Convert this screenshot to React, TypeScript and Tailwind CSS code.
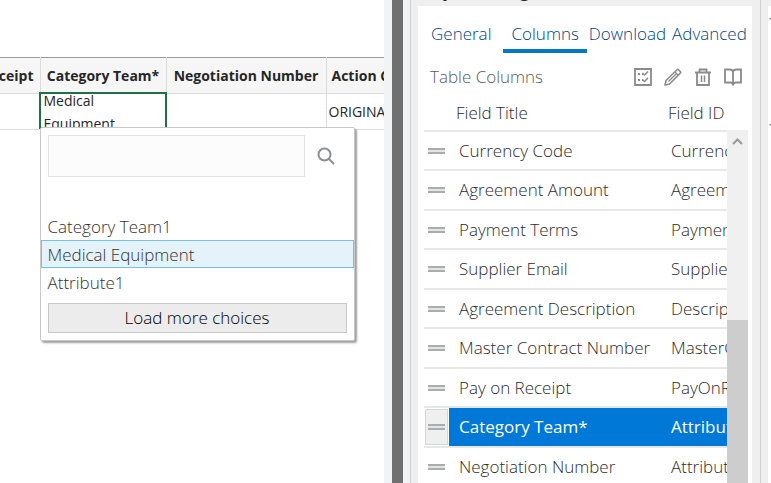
import React from 'react';

const fields = [
  { title: 'Currency Code', id: 'CurrencyCode' },
  { title: 'Agreement Amount', id: 'AgreementAmount' },
  { title: 'Payment Terms', id: 'PaymentTerms' },
  { title: 'Supplier Email', id: 'SupplierEmail' },
  { title: 'Agreement Description', id: 'Description' },
  { title: 'Master Contract Number', id: 'MasterContractNumber' },
  { title: 'Pay on Receipt', id: 'PayOnReceipt' },
  { title: 'Category Team*', id: 'Attribute1', selected: true },
  { title: 'Negotiation Number', id: 'Attribute2' },
];

const choices = ['Category Team1', 'Medical Equipment', 'Attribute1'];

function DragHandle() {
  return (
    <svg width="17" height="6" viewBox="0 0 17 6" className="block" aria-hidden="true">
      <path d="M0 0h17v6H0z" fill="#e4e4e6" />
      <path d="M0 1h17M0 5h17" stroke="#96999b" strokeWidth="1.6" />
    </svg>
  );
}

/* Popup with the list of values for the active cell */
function ChoicePicker() {
  return (
    <div className="absolute -left-px top-[33px] z-10 w-[315px] rounded-xs border border-[#c6c8ca] bg-white text-[17px] font-light text-[#333] shadow-[2px_2px_2px_#a0a0a0]">
      <div className="flex items-center gap-3 px-[7px] pt-[7px]">
        <input
          aria-label="Search choices"
          className="h-[42px] w-[257px] border border-[#e2e2e2] bg-[#fcfcfc] px-2 outline-none"
        />
        <button aria-label="Search">
          <svg width="18" height="18" viewBox="0 0 18 18" fill="none" stroke="#8c8f91" strokeWidth="2">
            <circle cx="7.5" cy="7.5" r="6" />
            <path d="M12 12l5 5" />
          </svg>
        </button>
      </div>
      <ul className="pt-[35px]">
        {choices.map((choice) => (
          <li
            key={choice}
            className={
              choice === 'Medical Equipment'
                ? 'h-7 border border-[#78c0e8] bg-[#e4f2fa] px-1.5 leading-[28px]'
                : 'h-7 px-[7px] leading-[30px]'
            }
          >
            {choice}
          </li>
        ))}
      </ul>
      <div className="p-[7px]">
        <button className="h-[30px] w-full border border-[#c6c8c8] bg-[#ececec] text-black">
          Load more choices
        </button>
      </div>
    </div>
  );
}

function Worksheet() {
  return (
    <main className="min-w-0 flex-1 overflow-hidden bg-white pt-[57px] text-[#262626]">
      <table className="w-[520px] table-fixed border-collapse border-t border-[#999]">
        <colgroup>
          <col className="w-10" />
          <col className="w-[126px]" />
          <col className="w-40" />
          <col className="w-[194px]" />
        </colgroup>
        <thead>
          <tr className="h-9 bg-[#f6f6f6] text-[14px] whitespace-nowrap">
            <th className="border-r border-b border-[#dcdcdc] p-0">
              <div className="flex justify-end pr-1.5">Pay on Receipt</div>
            </th>
            <th className="border-r border-b border-[#dcdcdc] p-0">Category Team*</th>
            <th className="border-r border-b border-[#dcdcdc] p-0">Negotiation Number</th>
            <th className="border-b border-[#dcdcdc] p-0 pl-[5px] text-left">Action Code</th>
          </tr>
        </thead>
        <tbody>
          <tr className="h-9 text-[14px]">
            <td className="border-r border-b border-[#dcdcdc] p-0" />
            <td className="border-r border-b border-[#dcdcdc] p-0 align-top">
              <div className="relative -mt-0.5 -mr-px -ml-0.5 h-[37px] border-2 border-[#1e7145]">
                <div className="-mt-[5px] h-[38px] overflow-hidden pl-[3px] leading-[23px]">
                  Medical
                  <br />
                  Equipment
                </div>
                <ChoicePicker />
              </div>
            </td>
            <td className="border-r border-b border-[#dcdcdc] p-0" />
            <td className="border-b border-[#dcdcdc] p-0 pl-0.5">ORIGINAL</td>
          </tr>
        </tbody>
      </table>
    </main>
  );
}

function Toolbar() {
  return (
    <div className="flex gap-3 text-[#8b8b8b]">
      <button aria-label="Select columns">
        <svg width="18" height="18" viewBox="0 0 18 18" fill="none" stroke="currentColor" strokeWidth="1.8">
          <path d="M1 1h16v16H1z" />
          <path d="M4 6h2M8 6h1M4 12h2M8 12h1" strokeWidth="2" />
          <path d="M8.5 5l2 2L14 3.5M8.5 11.5l2 2L14 10" strokeWidth="1.5" />
        </svg>
      </button>
      <button aria-label="Edit">
        <svg width="18" height="18" viewBox="0 0 18 18" fill="none" stroke="currentColor" strokeWidth="1.6" strokeLinejoin="round">
          <path d="M1 17l1-4.5L13 1.8q.8-.8 1.6 0l1.7 1.7q.8.8 0 1.6L5.5 16z" />
          <path d="M11 4l3.2 3.2M4.5 13.5l8-8" strokeWidth="1.2" />
        </svg>
      </button>
      <button aria-label="Delete">
        <svg width="18" height="18" viewBox="0 0 18 18" fill="none" stroke="currentColor" strokeWidth="1.8">
          <path d="M1 4.5h16M5.5 4V1.5h7V4M3 4.5V17h12V4.5" />
          <path d="M7.5 7.5V14M10.5 7.5V14" strokeWidth="1.5" />
        </svg>
      </button>
      <button aria-label="Help">
        <svg width="18" height="18" viewBox="0 0 18 18" fill="none" stroke="currentColor" strokeWidth="1.8">
          <path d="M9 3.5Q8 1.5 6 1.5H1v13h5.5q1.5 0 2.500 2 1-2 2.500-2H17v-13h-5q-2 0-3 2v13" />
        </svg>
      </button>
    </div>
  );
}

function FieldTable() {
  return (
    <div className="ml-1.5 mr-1 overflow-hidden text-[17px] font-light text-[#2c2c2c]">
      <div className="flex h-[34px] items-center pl-8 pr-5 whitespace-nowrap">
        <span className="w-[212px] shrink-0">Field Title</span>
        <span>Field ID</span>
      </div>
      <div className="flex">
        <table className="min-w-0 flex-1 table-fixed border-t-2 border-[#e7e7e7]">
          <tbody className="block">
            {fields.map((f) => (
              <tr
                key={f.id}
                className="flex whitespace-nowrap border-b-2 border-[#e7e7e7] odd:h-[39px] even:h-10"
              >
                <td className="flex w-[25px] shrink-0 p-px">
                  <span
                    className={
                      f.selected
                        ? 'flex flex-1 items-center justify-center border border-[#c5dbe8] bg-[#efefef]'
                        : 'flex flex-1 items-center justify-center'
                    }
                  >
                    <DragHandle />
                  </span>
                </td>
                <td
                  className={
                    f.selected
                      ? 'flex w-0 flex-1 items-center overflow-hidden bg-[#0078d7] pl-2.5 font-normal text-white'
                      : 'flex w-0 flex-1 items-center overflow-hidden pl-2.5'
                  }
                >
                  <span className="w-[212px] shrink-0">{f.title}</span>
                  <span>{f.id}</span>
                </td>
              </tr>
            ))}
          </tbody>
        </table>
        <div className="flex w-[21px] shrink-0 flex-col bg-[#f0f0f0] pt-2">
          <svg width="21" height="8" viewBox="0 0 21 8" fill="none" stroke="#989898" strokeWidth="2">
            <path d="M6 6l4.5-4.5L15 6" />
          </svg>
          <div className="mt-[174px] flex-1 bg-[#cdcdcd]" />
        </div>
      </div>
    </div>
  );
}

const tabs = ['General', 'Columns', 'Download', 'Advanced'];

function DesignerPanel() {
  return (
    <aside className="flex w-[351px] shrink-0 flex-col border-r border-l border-[#d0d0d0] bg-[#efefef] pr-2 pl-[7px]">
      <h1 className="-mt-5 h-[26px] shrink-0 pl-1.5 text-[17px] leading-[22px] font-semibold text-[#262626]">
        Layout Designer
      </h1>
      <section className="flex-1 bg-white">
        <nav className="flex h-[47px] pl-1.5 text-[17px] font-light text-[#00457f]">
          {tabs.map((tab) => (
            <button
              key={tab}
              className={
                tab === 'Columns'
                  ? 'border-b-4 border-[#0078c8] px-2 pt-3'
                  : 'border-b-4 border-transparent pt-3 first:pr-3 first:pl-[7px] nth-3:pr-1.5 nth-3:pl-0.5'
              }
            >
              {tab}
            </button>
          ))}
        </nav>
        <div className="flex h-[43px] items-center justify-between pt-1 pr-2.5 pl-3">
          <h2 className="text-[17px] font-light text-[#5a5a5a]">Table Columns</h2>
          <Toolbar />
        </div>
        <FieldTable />
      </section>
    </aside>
  );
}

/* Edge of the task pane docked to the right */
function PaneEdge() {
  return (
    <div className="flex w-2.5 shrink-0 flex-col bg-[#efefef] pt-1.5 pl-[7px]">
      <div className="flex flex-1 flex-col gap-[104px] bg-white pt-3 pl-px">
        <svg width="2" height="2" viewBox="0 0 2 2" aria-hidden="true">
          <path d="M0 0h2v2z" fill="#777" />
        </svg>
        <svg width="2" height="2" viewBox="0 0 2 2" aria-hidden="true">
          <path d="M0 0h2v2z" fill="#777" />
        </svg>
      </div>
    </div>
  );
}

export default function App() {
  return (
    <div className="flex h-screen overflow-hidden bg-[#efefef] font-['Open_Sans','Noto_Sans',sans-serif]">
      <Worksheet />
      <div className="w-[26px] shrink-0 border-r-7 border-l-8 border-[#f2f3f5] bg-[#707070]" />
      <DesignerPanel />
      <PaneEdge />
    </div>
  );
}
